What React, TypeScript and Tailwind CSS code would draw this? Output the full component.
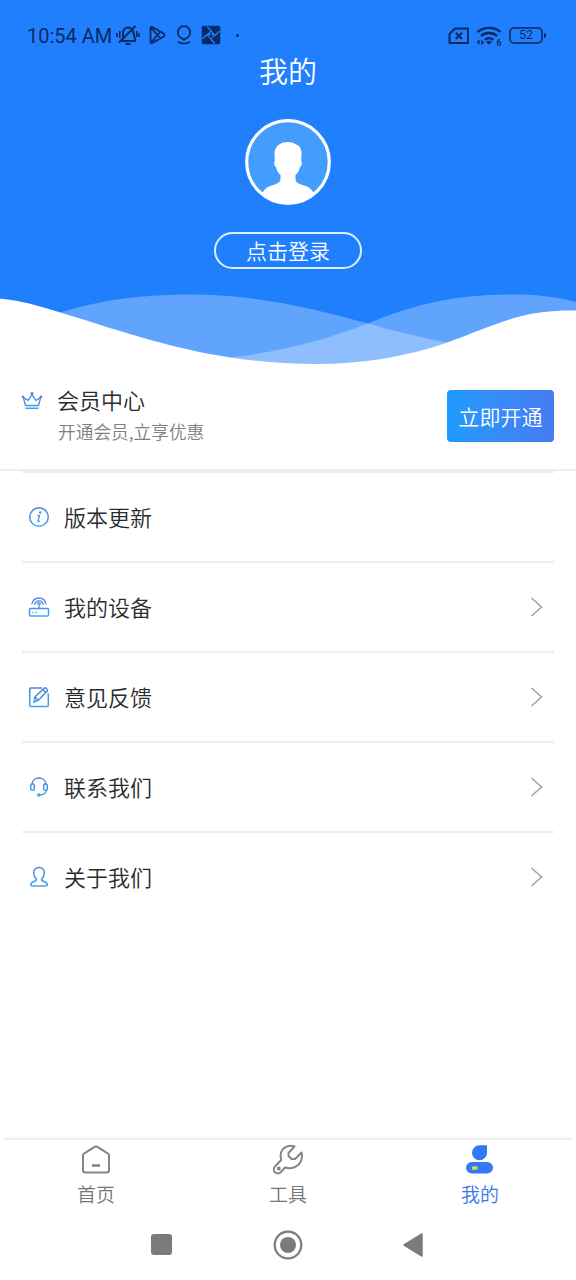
import type { ReactNode } from 'react';

const INK = '#0a2a63';

function StatusBar() {
  return (
    <div className="flex h-[52px] items-end pl-[27px] pr-[30px] text-[#0a2a63]">
      <div className="flex h-[34px] flex-1 items-center">
        <span className="w-[88px] whitespace-nowrap pt-[1px] font-['Roboto',sans-serif] text-[20px] font-[450] leading-[34px]">
          10:54 AM
        </span>
        {/* Muted bell */}
        <svg width="26" height="22" viewBox="0 0 26 22" fill="none" stroke={INK} strokeWidth="1.9" className="shrink-0">
          <path d="M6 17h15M8 16.500V9.500C8 6 10 3.500 13 3.500s5.500 2.500 5.500 6l2 7M4 18.500 20.500 2M10.500 20h5" />
          <path d="M2 9v4M4.800 7v7M24 9v4M21.700 7v6" strokeWidth="1.600" />
        </svg>
        {/* Play store */}
        <svg width="19" height="20" viewBox="0 0 19 20" fill="none" stroke={INK} strokeWidth="1.800" strokeLinejoin="round" className="ml-[7px] shrink-0">
          <path d="M2.500 3v14c0 1 .8 1.400 1.700 1l11.300-6.400c1.300-.8 1.300-2.400 0-3.200L4.200 2c-.9-.4-1.700 0-1.700 1zM3 2.500l9.500 11M3 17.500l9.500-11" />
        </svg>
        {/* Location */}
        <svg width="16" height="20" viewBox="0 0 16 20" fill="none" stroke={INK} strokeWidth="1.700" className="ml-[9px] shrink-0">
          <path d="M8 14.800 4.200 12.200a6.200 6.200 0 1 1 7.600 0zM2 16.300c1.500 2.800 10.500 2.800 12 0" />
        </svg>
        {/* Pinwheel */}
        <svg width="20" height="20" viewBox="0 0 20 20" className="ml-[9px] shrink-0">
          <rect x=".8" y=".8" width="18.400" height="18.400" rx="1.500" fill={INK} />
          <path d="m10 5.300 4.700 4.700-4.700 4.700L5.300 10z" fill="#1f7ffd" />
          <path d="M6 1.500 10.500 6M18.500 6 14 10.500M14 18.500 9.500 14M1.500 14 6 9.500" stroke="#1f7ffd" strokeWidth="1.400" fill="none" />
          <path d="M10 7v5.500M8 10.500l2 2 2-2" stroke={INK} strokeWidth="1.300" fill="none" />
        </svg>
        <span className="ml-[15px] h-[3px] w-[3px] rounded-full bg-[#0a2a63]" />
      </div>

      <div className="flex h-[34px] items-center pt-[1px]">
        {/* No SIM */}
        <svg width="22" height="18" viewBox="0 0 22 18" fill="none" stroke={INK} strokeWidth="2">
          <path d="M7 1.500h13v14.500H1.500V7z" strokeLinejoin="round" />
          <path d="m7.700 5.700 6.300 6.300M14 5.700l-6.300 6.300" />
        </svg>
        {/* Wifi */}
        <svg width="28" height="22" viewBox="0 0 28 22" fill="none" stroke={INK} strokeWidth="2.300" className="ml-[5px]">
          <path d="M2.500 7c6.500-5.500 17-5.500 23 0M6 11c4.500-4 11.500-4 16 0M9.700 14.800c2.500-2.200 6-2.200 8.600 0" />
          <path d="M11 16.800c1.800-1.400 4.200-1.400 6 0L14 19.800z" fill={INK} stroke="none" />
          <path d="M4 15v4.500M2 17.500l2-2M6.800 15v4.500M8.800 17l-2 2" strokeWidth="1.200" />
          <text x="21.500" y="20.500" fontSize="8.500" fontWeight="700" fontFamily="Roboto, sans-serif" fill={INK} stroke="none">6</text>
        </svg>
        {/* Battery */}
        <div className="ml-[6px] flex h-[17px] w-[34px] items-center justify-center rounded-[5px] border-2 border-[#0a2a63]/80 font-['Roboto',sans-serif] text-[12.500px] font-[450] leading-none">
          52
        </div>
        <span className="ml-[1px] h-[5px] w-[2px] rounded-r bg-[#0a2a63]" />
      </div>
    </div>
  );
}

function Avatar() {
  return (
    <svg width="86" height="86" viewBox="0 0 86 86" className="mx-auto mt-[30px] block">
      <defs>
        <clipPath id="face">
          <circle cx="43" cy="43" r="42" />
        </clipPath>
      </defs>
      <circle cx="43" cy="43" r="41.300" fill="#429dfe" />
      <g clipPath="url(#face)" fill="#fff">
        <path d="M43 23c4 0 6.200 1 8 2.500 4 1 5.700 5 5.500 9.500l-.3 7c1.400 1 .4 5.500-1.400 6.500-.6 3-2 5.500-4.300 7.500v4.500c.5 4 5.500 4.800 9.500 6.200 5 1.500 8 5.300 10 9.800V86H16v-9.500c2-4.500 5-8.300 10-9.800 4-1.400 9-2.200 9.500-6.200V56c-2.300-2-3.700-4.500-4.300-7.500-1.800-1-2.800-5.500-1.400-6.500l-.3-7c-.2-7 5-12 13.500-12z" />
      </g>
      <circle cx="43" cy="43" r="41.300" fill="none" stroke="#fff" strokeWidth="3.200" />
    </svg>
  );
}

function Waves() {
  return (
    <svg width="576" height="76" viewBox="0 0 576 76" className="mt-[21px] block">
      <path d="M40 30C90 10 140 4.500 191 4.500c65 0 120 13.500 177 29 25 7 50 13.500 82 19.500L430 76H40z" fill="#fff" fillOpacity=".29" />
      <path d="M210 69.500C275 64 325 50 368 33.500 415 14 455 4.500 514 4.500c24 0 44 2.500 62 7.500v64H210z" fill="#fff" fillOpacity=".29" />
      <path d="M0 8.500C20 10.500 38 15.500 59 22c34 10.500 66 21 101 30.500C212 66.500 262 74 316 74c49 0 92-8 130-21 25-9 45-18 68-25 20-6 42-8 62-7.500v56H0z" fill="#fff" />
    </svg>
  );
}

type MenuItem = { label: string; icon: ReactNode; arrow: boolean };

const menu: MenuItem[] = [
  {
    label: '版本更新',
    arrow: false,
    icon: (
      <>
        <circle cx="11" cy="11" r="9.300" />
        <path d="M9.300 9.700h2.200l-1.500 5.300c-.2.700.7.700 1.800 0" strokeWidth="1.300" />
        <circle cx="12.200" cy="6.500" r=".5" fill="#4a8fdd" />
      </>
    ),
  },
  {
    label: '我的设备',
    arrow: true,
    icon: (
      <>
        <rect x="1.500" y="12.500" width="19" height="7.500" rx="1" />
        <path d="M11 12.500V7M3.800 8.500C5.300-.2 16.700-.2 18.200 8.500M6.500 8.800c1.200-5.300 7.800-5.300 9 0M9 8.300c.6-2 3.400-2 4 0M4.500 16.500h1.300M7.500 16.500h1.300" strokeWidth="1.300" />
      </>
    ),
  },
  {
    label: '意见反馈',
    arrow: true,
    icon: (
      <>
        <path d="M14 2H3a1.300 1.300 0 0 0-1.300 1.300v15.900A1.300 1.300 0 0 0 3 20.500h16a1.300 1.300 0 0 0 1.300-1.300V7.500" />
        <path d="m6 16 1-5 9.300-9c1-.9 4 1.700 3 3l-9 9.300zM7 11l3.300 3.300M14.800 3.500l3.100 3" />
      </>
    ),
  },
  {
    label: '联系我们',
    arrow: true,
    icon: (
      <>
        <path d="M4 8c1-8 13-8 14 0M18.500 14c-.5 3.200-3.200 4.800-6.500 5" />
        <rect x="2.700" y="8" width="3.600" height="6.300" rx="1.600" />
        <rect x="15.700" y="8" width="3.600" height="6.300" rx="1.600" />
        <circle cx="10.800" cy="19" r="1" fill="#4a9fea" />
      </>
    ),
  },
  {
    label: '关于我们',
    arrow: true,
    icon: (
      <path d="M11 1.500c-3.300 0-5.300 2.300-5.300 5.300 0 2.700 1 4.700 2.600 6.100.5 1.300-.3 1.800-1.600 2.300-2.500.8-4 1.500-4 3.300 0 1.200.7 1.500 2 1.500h12.600c1.300 0 2-.3 2-1.500 0-1.800-1.500-2.500-4-3.300-1.300-.5-2.100-1-1.600-2.300 1.600-1.400 2.600-3.400 2.600-6.100 0-3-2-5.300-5.300-5.300z" />
    ),
  },
];

export default function App() {
  return (
    <div className="flex h-[1280px] w-[576px] flex-col overflow-hidden bg-white font-['Noto_Sans_CJK_SC',sans-serif] font-[350]">
      <svg width="0" height="0" className="absolute">
        <defs>
          <linearGradient id="line" gradientUnits="userSpaceOnUse" x1="0" y1="0" x2="0" y2="22">
            <stop offset="0" stopColor="#4e7fd2" />
            <stop offset="1" stopColor="#45a6f0" />
          </linearGradient>
        </defs>
      </svg>

      {/* Profile header */}
      <header className="h-[366px] shrink-0 bg-[#1f7ffd] text-white">
        <StatusBar />
        <h1 className="h-[37px] text-center text-[29px] leading-[36px]">我的</h1>
        <Avatar />
        <button
          type="button"
          className="mx-auto mt-[27px] flex h-[37px] w-[148px] items-center justify-center rounded-full border-2 border-white/85 text-[21px] leading-none"
        >
          点击登录
        </button>
        <Waves />
      </header>

      {/* Membership */}
      <section className="flex h-[105px] shrink-0 border-b-2 border-[#eeeeee] pl-[21px] pr-[22px]">
        <svg width="22" height="22" viewBox="0 0 22 22" fill="none" stroke="url(#line)" strokeWidth="1.400" strokeLinejoin="round" className="mt-[24px]">
          <path d="M4.500 15.500 2.300 7.300l4.900 3.200L11 4.500l3.800 6 4.900-3.200-2.200 8.200zM4.500 18.200h13" />
          <circle cx="11" cy="3.500" r=".8" />
          <circle cx="2" cy="6.800" r=".6" />
          <circle cx="20" cy="6.800" r=".6" />
        </svg>
        <div className="ml-[14px] flex-1 pt-[17px]">
          <p className="text-[22px] leading-[32px] text-[#2b2b2b]">会员中心</p>
          <p className="pl-[1px] text-[17.700px] leading-[33px] text-[#808080]">开通会员,立享优惠</p>
        </div>
        <button
          type="button"
          className="mt-[24px] h-[52px] w-[107px] rounded-[4px] bg-linear-to-r from-[#1c9bfe] to-[#457af2] text-[21px] leading-[52px] text-white"
        >
          立即开通
        </button>
      </section>

      {/* Menu */}
      <ul className="mx-[22px]">
        {menu.map((item) => (
          <li
            key={item.label}
            className="flex h-[90px] items-center border-b-2 border-[#eeeeee] pl-[6px] pr-[11px] first:h-[92px] first:border-t-2 last:h-[88px] last:border-b-0"
          >
            <svg width="22" height="22" viewBox="0 0 22 22" fill="none" stroke="url(#line)" strokeWidth="1.500">
              {item.icon}
            </svg>
            <span className="ml-[14px] flex-1 pb-[3px] text-[22px] leading-[32px] text-[#2b2b2b]">{item.label}</span>
            {item.arrow && (
              <svg width="13" height="20" viewBox="0 0 13 20" fill="none" stroke="#a0a0a0" strokeWidth="1.500">
                <path d="m1.500 1 10 9-10 9" />
              </svg>
            )}
          </li>
        ))}
      </ul>

      {/* Tab bar */}
      <nav className="mt-auto h-[73px] shrink-0 text-[19px] leading-[28px] text-[#777777]">
        <div className="mx-[4px] h-[4px] bg-linear-to-b from-white to-[#ececec]" />
        <div className="grid grid-cols-3 pt-[3px]">
          <div className="flex flex-col items-center">
            <svg width="32" height="34" viewBox="0 0 32 34" fill="none" stroke="#858585" strokeWidth="2" strokeLinejoin="round">
              <path d="M15 3.700a2 2 0 0 1 2 0l11 7a2 2 0 0 1 1 1.700V27a2.500 2.500 0 0 1-2.500 2.500h-21A2.500 2.500 0 0 1 3 27V12.400a2 2 0 0 1 1-1.700z" />
              <path d="M12 22.500h8" strokeWidth="2.600" />
            </svg>
            <span className="mt-[3px]">首页</span>
          </div>
          <div className="flex flex-col items-center">
            <svg width="32" height="34" viewBox="0 0 32 34" fill="none" stroke="#858585" strokeWidth="2" strokeLinejoin="round">
              <path d="M22.500 3.500c-5-2-11.500.5-13.500 6-.8 2.500-.6 5 .2 7.500L3 23.500a4 4 0 0 0 5.700 5.700L13 24.500c8 2.500 17-2 17-12 0-1.200-.2-2-.5-3L23 16h-3.500l-3-3V10z" />
              <circle cx="6.800" cy="25.500" r="1" />
            </svg>
            <span className="mt-[3px]">工具</span>
          </div>
          <div className="flex flex-col items-center text-[#3578f0]">
            <svg width="32" height="34" viewBox="0 0 32 34">
              <path d="M15.500 2.300H22a1 1 0 0 1 1 1v6.500a7.500 7.500 0 1 1-7.500-7.500z" fill="#3578f6" />
              <rect x="2" y="19" width="27" height="11.500" rx="5.750" fill="#3578f6" />
              <rect x="8" y="23.300" width="5.500" height="3.500" fill="#d8d94d" />
            </svg>
            <span className="mt-[3px]">我的</span>
          </div>
        </div>
      </nav>

      {/* System navigation */}
      <div className="flex h-[71px] shrink-0 items-center justify-between pl-[151px] pr-[152px]">
        <span className="h-[21px] w-[21px] rounded-[3px] bg-[#7b7b7b]" />
        <svg width="30" height="30" viewBox="0 0 30 30" className="ml-[1px]">
          <circle cx="15" cy="15" r="13.300" fill="none" stroke="#7b7b7b" strokeWidth="2.200" />
          <circle cx="15" cy="15" r="8" fill="#7b7b7b" />
        </svg>
        <svg width="22" height="26" viewBox="0 0 22 26">
          <path d="M2 13 20 2v22z" fill="#7b7b7b" stroke="#7b7b7b" strokeWidth="1.500" strokeLinejoin="round" />
        </svg>
      </div>
    </div>
  );
}
